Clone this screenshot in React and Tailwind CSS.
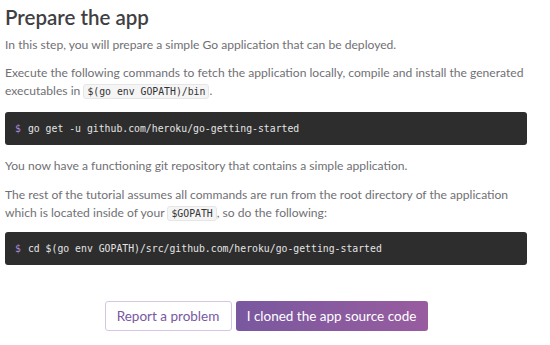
const Code = ({ children }) => (
  <code className="inline-block rounded-[3px] border border-[#e6e6e6] bg-[#f5f5f5] px-[3px] font-['DejaVu_Sans_Mono',monospace] text-[9.8px] leading-[13px] text-[#333]">
    {children}
  </code>
);

const Terminal = ({ cmd }) => (
  <div className="flex h-[33px] items-center rounded-[3px] bg-[#2d2d2d] pl-[10px] font-['DejaVu_Sans_Mono',monospace] text-[9.8px] text-[#e4e4e4]">
    <span className="mr-[7px] text-[#a98ad6]">$</span>
    <span>{cmd}</span>
  </div>
);

export default function App() {
  return (
    <div className="h-[345px] w-[550px] overflow-hidden bg-white font-['Lato',sans-serif]">
      <div className="w-[527px] pl-[5px]">
        <h1 className="pt-[4px] text-[20.5px] leading-[26px] font-semibold text-[#3f3f44]">Prepare the app</h1>
        <div className="text-[12.1px] leading-[18px] text-[#707074]">
          <p className="mt-[6px]">In this step, you will prepare a simple Go application that can be deployed.</p>
          <p className="mt-[10px]">
            Execute the following commands to fetch the application locally, compile and install the generated executables in <Code>$(go env GOPATH)/bin</Code>.
          </p>
          <div className="mt-[12px]">
            <Terminal cmd="go get -u github.com/heroku/go-getting-started" />
          </div>
          <p className="mt-[12px]">You now have a functioning git repository that contains a simple application.</p>
          <p className="mt-[11px]">
            The rest of the tutorial assumes all commands are run from the root directory of the application which is located inside of your <Code>$GOPATH</Code>, so do the following:
          </p>
          <div className="mt-[10px]">
            <Terminal cmd="cd $(go env GOPATH)/src/github.com/heroku/go-getting-started" />
          </div>
        </div>
        <div className="mt-[36px] flex justify-center gap-[4px]">
          <button className="h-[30px] w-[127px] rounded-[3px] border border-[#d6c6e4] bg-white text-[13.5px] text-[#79589f]">
            Report a problem
          </button>
          <button className="h-[30px] w-[192px] rounded-[3px] bg-gradient-to-r from-[#79589f] to-[#985c9f] text-[13.5px] text-white">
            I cloned the app source code
          </button>
        </div>
      </div>
    </div>
  );
}
